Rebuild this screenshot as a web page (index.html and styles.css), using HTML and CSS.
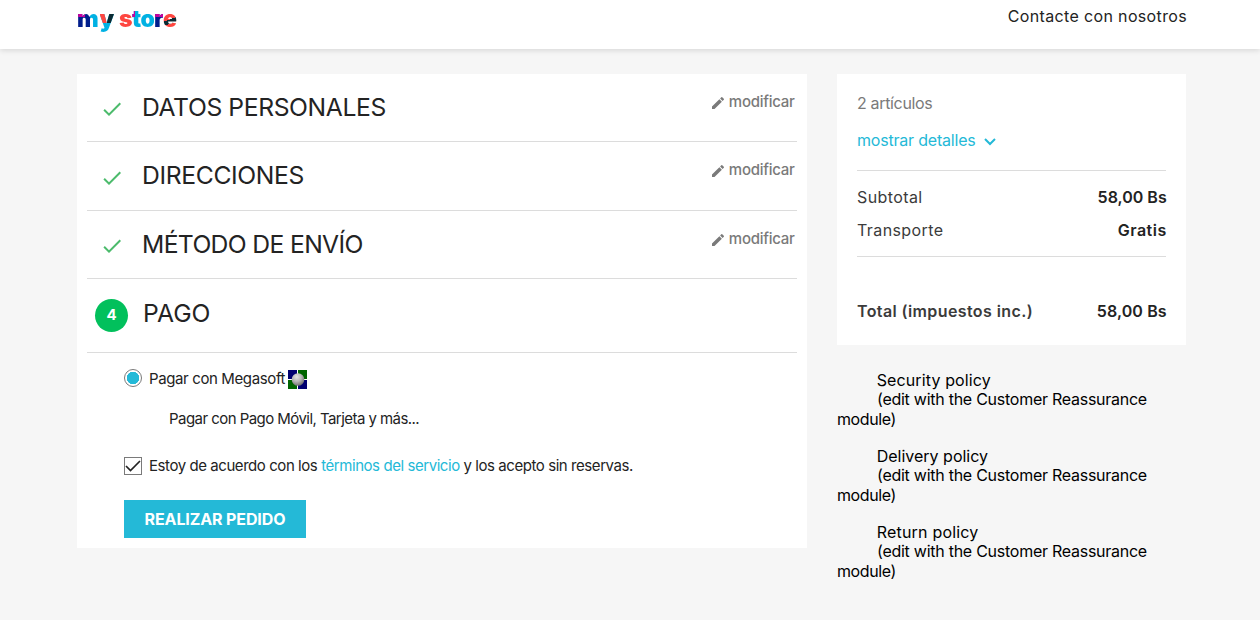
FILE: index.html
```
<!DOCTYPE html>
<html lang="es">
<head>
<meta charset="utf-8">
<title>my store</title>
<link rel="stylesheet" href="styles.css">
</head>
<body>
<header class="header">
  <a class="logo"><span class="lm">m</span><span class="ly">y</span><span class="ls">s</span><span class="lt">t</span><span class="lo">o</span><span class="lr">r</span><span class="le">e</span></a>
  <a class="contact">Contacte con nosotros</a>
</header>
<main class="content">
  <section class="checkout">
    <div class="step step-1">
      <svg class="check" viewBox="0 0 24 24"><path d="M9 16.17L4.83 12l-1.42 1.41L9 19 21 7l-1.41-1.41z"/></svg>
      <h1 class="title title-a">DATOS PERSONALES</h1>
      <a class="edit"><svg class="pencil" viewBox="0 0 24 24"><path d="M3 17.25V21h3.75L17.81 9.94l-3.75-3.75L3 17.25zM20.71 7.04a1 1 0 0 0 0-1.41l-2.34-2.34a1 1 0 0 0-1.41 0l-1.83 1.83 3.75 3.75 1.83-1.83z"/></svg><span>modificar</span></a>
    </div>
    <div class="step step-2">
      <svg class="check" viewBox="0 0 24 24"><path d="M9 16.17L4.83 12l-1.42 1.41L9 19 21 7l-1.41-1.41z"/></svg>
      <h1 class="title title-b">DIRECCIONES</h1>
      <a class="edit"><svg class="pencil" viewBox="0 0 24 24"><path d="M3 17.25V21h3.75L17.81 9.94l-3.75-3.75L3 17.25zM20.71 7.04a1 1 0 0 0 0-1.41l-2.34-2.34a1 1 0 0 0-1.41 0l-1.83 1.83 3.75 3.75 1.83-1.83z"/></svg><span>modificar</span></a>
    </div>
    <div class="step step-3">
      <svg class="check" viewBox="0 0 24 24"><path d="M9 16.17L4.83 12l-1.42 1.41L9 19 21 7l-1.41-1.41z"/></svg>
      <h1 class="title title-c">MÉTODO DE ENVÍO</h1>
      <a class="edit"><svg class="pencil" viewBox="0 0 24 24"><path d="M3 17.25V21h3.75L17.81 9.94l-3.75-3.75L3 17.25zM20.71 7.04a1 1 0 0 0 0-1.41l-2.34-2.34a1 1 0 0 0-1.41 0l-1.83 1.83 3.75 3.75 1.83-1.83z"/></svg><span>modificar</span></a>
    </div>
    <div class="step step-4">
      <span class="number">4</span>
      <h1 class="title title-d">PAGO</h1>
    </div>
    <div class="payment">
      <div class="option">
        <span class="radio"></span>
        <span class="opt-label">Pagar con Megasoft</span>
        <svg class="mega" viewBox="0 0 19 19">
          <defs><radialGradient id="ball" cx=".4" cy=".3" r=".75"><stop offset="0" stop-color="#e4e4e4"/><stop offset=".5" stop-color="#b4b4b4"/><stop offset="1" stop-color="#666"/></radialGradient></defs>
          <path fill="#000070" d="M0 0h9v9H0zM10 10h9v9h-9z"/><path fill="#006400" d="M10 0h9v9h-9zM0 10h9v9H0z"/>
          <circle cx="10" cy="9.500" r="6.300" fill="url(#ball)"/>
        </svg>
      </div>
      <p class="info">Pagar con Pago Móvil, Tarjeta y más...</p>
      <div class="terms">
        <span class="box"><svg viewBox="0 0 16 16"><path d="M1 8l4.500 4.500L15 3" fill="none" stroke="#232323" stroke-width="1.700"/></svg></span>
        <span class="terms-text">Estoy de acuerdo con los <a class="link">términos del servicio</a> y los acepto sin reservas.</span>
      </div>
      <button class="order">REALIZAR PEDIDO</button>
    </div>
  </section>
  <aside class="side">
    <div class="summary">
      <p class="count">2 artículos</p>
      <a class="details"><span>mostrar detalles</span><svg class="chevron" viewBox="0 0 12 8"><path d="M1 1l5 5 5-5" fill="none" stroke="#24b9d7" stroke-width="2"/></svg></a>
      <div class="lines">
        <div class="row"><span class="label">Subtotal</span><b>58,00 Bs</b></div>
        <div class="row"><span class="label">Transporte</span><b class="free">Gratis</b></div>
      </div>
      <div class="row total"><b class="label">Total (impuestos inc.)</b><b class="sum">58,00 Bs</b></div>
    </div>
    <div class="policy"><p class="first">Security policy</p><p class="second">(edit with the Customer Reassurance <span class="pol-end">module)</span></p></div>
    <div class="policy"><p class="first first-b">Delivery policy</p><p class="second">(edit with the Customer Reassurance <span class="pol-end">module)</span></p></div>
    <div class="policy"><p class="first first-c">Return policy</p><p class="second">(edit with the Customer Reassurance <span class="pol-end">module)</span></p></div>
  </aside>
</main>
</body>
</html>
```
FILE: styles.css
```
* { box-sizing: border-box; }
body { margin: 0; height: 620px; overflow: hidden; background: #f6f6f6; color: #232323; font-family: Inter, "Noto Sans", sans-serif; font-size: 16px; }
p, h1 { margin: 0; }
svg { display: block; flex: none; }
.header { height: 49px; padding: 0 73px 0 77px; display: flex; justify-content: space-between; background: #fff; box-shadow: 0 2px 5px rgba(0,0,0,.11); }
.contact { padding-top: 6px; line-height: 20px; letter-spacing: .35px; }
.logo { display: flex; font: 900 23px/32px Inter, sans-serif; padding-top: 3px; }
.logo span { height: 32px; color: transparent; background-clip: text; -webkit-background-clip: text; background-repeat: no-repeat; }
.logo .lm { width: 22.500px; background-image: linear-gradient(#c5019f, #c5019f), linear-gradient(90deg, #011e8c 0 56%, #00b1e3 56%); background-size: 8px 14px, 100% 100%; }
.logo .ly { width: 19.500px; background-image: linear-gradient(90deg, #fe4640 0 50%, #0b2b33 50%), linear-gradient(#00b1e3, #00b1e3); background-size: 14px 20px, 100% 100%; }
.logo .ls { width: 13px; background-image: linear-gradient(#fe4640, #fe4640); }
.logo .lt { width: 8.500px; background-image: linear-gradient(#c5019f, #c5019f), linear-gradient(#00b1e3, #00b1e3); background-size: 3px 14px, 100% 100%; }
.logo .lo { width: 13.500px; background-image: linear-gradient(#00b1e3, #00b1e3); }
.logo .lr { width: 9px; background-image: linear-gradient(#c5019f, #c5019f), linear-gradient(#011e8c, #011e8c); background-size: 100% 14px, 100% 100%; }
.logo .le { width: 14px; background-image: linear-gradient(160deg, #fe4640 0 51%, #0b2b33 51% 63%, #fe4640 63%); }
.content { display: flex; align-items: flex-start; gap: 30px; padding: 25px 0 0 77px; }
.checkout { width: 730px; height: 474px; padding: 0 10px; background: #fff; }
.step { display: flex; align-items: flex-start; border-bottom: 1px solid #dcdcdc; }
.step-1 { height: 68px; padding-top: 18px; }
.step-2 { height: 69px; padding-top: 18px; }
.step-3 { height: 68px; padding-top: 18px; }
.step-4 { height: 74px; padding-top: 19px; }
.check { width: 24px; height: 24px; margin: 5px 18.500px 0 12.500px; fill: #4cbb6c; }
.step-2 .check { margin-top: 6px; }
.title { flex: 1; font-size: 24.700px; line-height: 30px; font-weight: 400; white-space: nowrap; }
.title-a { letter-spacing: -.4px; }
.title-b { letter-spacing: -.36px; }
.title-c { letter-spacing: -.65px; }
.title-d { letter-spacing: 0; }
.edit { display: flex; color: #7a7a7a; font-size: 15px; line-height: 20px; font-weight: 500; letter-spacing: -.27px; margin-right: 2.500px; }
.pencil { width: 16px; height: 16px; margin: 3px 3px 0 0; fill: #7a7a7a; }
.number { width: 33px; height: 33px; margin: 1px 15px 0 8px; border-radius: 50%; background: #02c05c; color: #fff; font-size: 15px; font-weight: 700; line-height: 31px; text-align: center; }
.payment { padding: 16px 0 0 37px; font-size: 15px; }
.option { display: flex; height: 20px; line-height: 20px; }
.opt-label { letter-spacing: -.38px; }
.radio { width: 18px; height: 18px; border: 1px solid #7a7a7a; border-radius: 50%; background: radial-gradient(circle, #24b9d7 0 6px, #fff 6.500px); margin-right: 7px; }
.mega { width: 19px; height: 19px; margin: 1px 0 0 3px; }
.info { margin: 20px 0 0 45px; line-height: 20px; letter-spacing: -.55px; }
.terms { display: flex; margin-top: 27px; line-height: 20px; height: 20px; letter-spacing: -.435px; }
.box { width: 18px; height: 18px; margin: 1px 7px 0 0; border: 1px solid #7a7a7a; }
.box svg { width: 16px; height: 16px; }
.link { color: #24b9d7; }
.order { display: block; width: 182px; height: 38px; margin-top: 24px; padding: 0; border: 0; background: #24b9d7; color: #fff; font: 700 16px/38px Inter, sans-serif; letter-spacing: -.12px; }
.side { width: 349px; }
.summary { height: 271px; padding: 19px 20px 0; background: #fff; }
.count { color: #7a7a7a; line-height: 20px; letter-spacing: -.34px; }
.details { display: flex; margin-top: 17px; color: #24b9d7; line-height: 20px; letter-spacing: -.2px; }
.chevron { width: 12px; height: 8px; margin: 8px 0 0 8.500px; }
.lines { margin-top: 20px; height: 87px; padding-top: 16px; border: solid #dcdcdc; border-width: 1px 0; display: grid; gap: 13px; align-content: start; }
.row { display: flex; justify-content: space-between; line-height: 20px; }
.row b { font-weight: 600; }
.row b:last-child { margin-right: -.700px; }
.row .label { color: #3b3b3b; letter-spacing: .4px; }
.row .free { letter-spacing: .5px; }
.row .sum { letter-spacing: .1px; }
.total { margin-top: 44px; }
.policy { height: 76px; color: #000; }
.summary + .policy { margin-top: 25px; }
.first { padding-left: 39.700px; line-height: 20px; letter-spacing: .12px; }
.first-b { letter-spacing: 0; }
.first-c { letter-spacing: .2px; }
.second { line-height: 20px; text-indent: 40px; margin-top: -1px; width: 330px; letter-spacing: -.26px; }
.pol-end { letter-spacing: -.4px; }
```
